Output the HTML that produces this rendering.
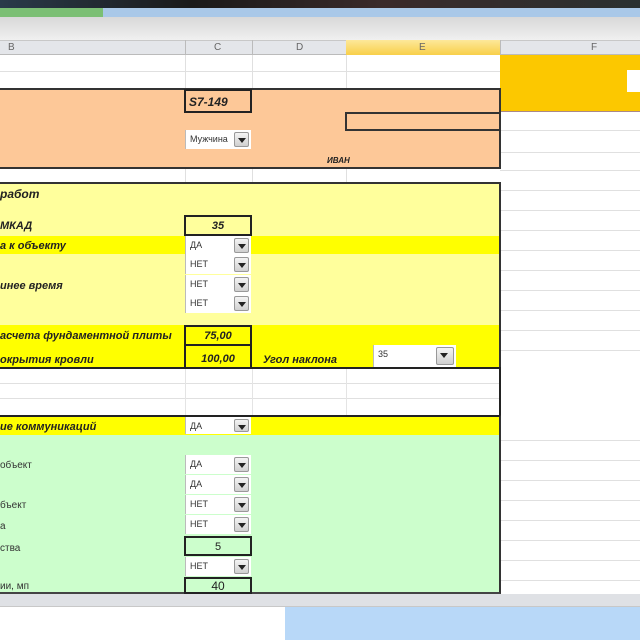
<!DOCTYPE html>
<html><head><meta charset="utf-8"><style>
*{margin:0;padding:0;box-sizing:border-box}
body{width:640px;height:640px;overflow:hidden;position:relative;background:#fff;font-family:"Liberation Sans","DejaVu Sans",sans-serif}
div{position:absolute}
.t{font-size:11px;font-weight:bold;font-style:italic;color:#222;white-space:nowrap}
.n{font-size:10px;color:#333;white-space:nowrap}
.dd{background:#fff;border-left:1px solid #bbb;height:19px;width:66px}
.dd span{position:absolute;left:4px;top:4px;font-size:9px;color:#333}
.dd i{position:absolute;right:2px;top:2px;width:15px;height:15px;background:linear-gradient(#f4f4f4,#d0d0d0);border:1px solid #999;border-radius:2px}
.dd i:after{content:"";position:absolute;left:3px;top:5px;border-left:4px solid transparent;border-right:4px solid transparent;border-top:5px solid #222}
.hl{height:1px;background:#e0e0e0}
.box{border:2px solid #222;text-align:center;font-size:11px;font-weight:bold;font-style:italic;color:#222}
</style></head><body>
<div style="left:0;top:0;width:640px;height:8px;background:linear-gradient(90deg,#2a3a4a,#1a1a1a 30%,#3a2a2a 60%,#2a3030)"></div>
<div style="left:0;top:8px;width:103px;height:9px;background:#7bbf74"></div>
<div style="left:103px;top:8px;width:537px;height:9px;background:#a9c8e8"></div>
<div style="left:0;top:17px;width:640px;height:23px;background:linear-gradient(#d8d8d8,#f0f0f0)"></div>
<div style="left:0;top:40px;width:640px;height:15px;background:#e4e6ea;border-top:1px solid #c8c8c8;border-bottom:1px solid #bbb"></div>
<div style="left:346px;top:40px;width:154px;height:15px;background:linear-gradient(#fde89a,#f8cf4a)"></div>
<div style="left:185px;top:40px;width:1px;height:15px;background:#bbb"></div>
<div style="left:252px;top:40px;width:1px;height:15px;background:#bbb"></div>
<div style="left:500px;top:40px;width:1px;height:15px;background:#bbb"></div>
<div class="n" style="left:8px;top:42px;color:#666">B</div>
<div class="n" style="left:214px;top:42px;color:#666">C</div>
<div class="n" style="left:296px;top:42px;color:#666">D</div>
<div class="n" style="left:419px;top:42px;color:#666">E</div>
<div class="n" style="left:591px;top:42px;color:#666">F</div>
<!-- white grid top -->
<div class="hl" style="left:0;top:71px;width:500px"></div>
<div style="left:185px;top:55px;width:1px;height:34px;background:#e0e0e0"></div>
<div style="left:252px;top:55px;width:1px;height:34px;background:#e0e0e0"></div>
<div style="left:346px;top:55px;width:1px;height:34px;background:#e0e0e0"></div>
<!-- F column -->
<div style="left:500px;top:55px;width:140px;height:57px;background:#fcc800;border-bottom:1px solid #a88"></div>
<div style="left:627px;top:70px;width:13px;height:22px;background:#fff"></div>
<div class="hl" style="left:500px;top:130px;width:140px"></div>
<div class="hl" style="left:500px;top:152px;width:140px"></div>
<div class="hl" style="left:500px;top:170px;width:140px"></div>
<div class="hl" style="left:500px;top:190px;width:140px"></div>
<div class="hl" style="left:500px;top:210px;width:140px"></div>
<div class="hl" style="left:500px;top:230px;width:140px"></div>
<div class="hl" style="left:500px;top:250px;width:140px"></div>
<div class="hl" style="left:500px;top:270px;width:140px"></div>
<div class="hl" style="left:500px;top:290px;width:140px"></div>
<div class="hl" style="left:500px;top:310px;width:140px"></div>
<div class="hl" style="left:500px;top:330px;width:140px"></div>
<div class="hl" style="left:500px;top:350px;width:140px"></div>
<div class="hl" style="left:500px;top:440px;width:140px"></div>
<div class="hl" style="left:500px;top:460px;width:140px"></div>
<div class="hl" style="left:500px;top:480px;width:140px"></div>
<div class="hl" style="left:500px;top:500px;width:140px"></div>
<div class="hl" style="left:500px;top:520px;width:140px"></div>
<div class="hl" style="left:500px;top:540px;width:140px"></div>
<div class="hl" style="left:500px;top:560px;width:140px"></div>
<div class="hl" style="left:500px;top:580px;width:140px"></div>
<!-- orange block -->
<div style="left:0;top:88px;width:501px;height:81px;background:#fdc898;border-top:2px solid #333;border-bottom:2px solid #333;border-right:2px solid #333"></div>
<div class="box" style="left:184px;top:89px;width:68px;height:24px;text-align:left;padding:4px 0 0 3px;font-size:12px">S7-149</div>
<div style="left:345px;top:112px;width:156px;height:19px;border:2px solid #333"></div>
<div class="dd" style="left:185px;top:130px"><span>Мужчина</span><i></i></div>
<div class="t" style="left:327px;top:156px;font-size:8px">ИВАН</div>
<!-- white row -->
<div class="hl" style="left:185px;top:169px;width:1px;height:14px"></div>
<div class="hl" style="left:252px;top:169px;width:1px;height:14px"></div>
<div class="hl" style="left:346px;top:169px;width:1px;height:14px"></div>
<!-- light yellow -->
<div style="left:0;top:182px;width:501px;height:186px;background:#ffff9c;border-top:2px solid #333;border-right:2px solid #333"></div>
<div class="t" style="left:0;top:187px;font-size:12px">работ</div>
<div class="t" style="left:0;top:220px">МКАД</div>
<div class="box" style="left:184px;top:215px;width:68px;height:21px;padding-top:3px">35</div>
<div style="left:0;top:236px;width:499px;height:18px;background:#ffff00"></div>
<div class="t" style="left:0;top:240px">а к объекту</div>
<div class="dd" style="left:185px;top:236px"><span>ДА</span><i></i></div>
<div class="dd" style="left:185px;top:255px"><span>НЕТ</span><i></i></div>
<div class="dd" style="left:185px;top:275px"><span>НЕТ</span><i></i></div>
<div class="dd" style="left:185px;top:294px"><span>НЕТ</span><i></i></div>
<div class="t" style="left:0;top:280px">инее время</div>
<div style="left:0;top:325px;width:499px;height:43px;background:#ffff00"></div>
<div class="t" style="left:0;top:330px">асчета фундаментной плиты</div>
<div class="t" style="left:0;top:354px">окрытия кровли</div>
<div class="box" style="left:184px;top:325px;width:68px;height:21px;padding-top:3px">75,00</div>
<div class="box" style="left:184px;top:344px;width:68px;height:25px;padding-top:7px">100,00</div>
<div class="t" style="left:263px;top:354px">Угол наклона</div>
<div class="dd" style="left:373px;top:345px;width:83px;height:22px"><span>35</span><i style="width:18px;height:18px"></i></div>
<!-- white rows -->
<div style="left:0;top:367px;width:501px;height:2px;background:#222"></div>
<div class="hl" style="left:0;top:383px;width:500px"></div>
<div class="hl" style="left:0;top:398px;width:500px"></div>
<div style="left:185px;top:369px;width:1px;height:47px;background:#e4e4e4"></div>
<div style="left:252px;top:369px;width:1px;height:47px;background:#e4e4e4"></div>
<div style="left:346px;top:369px;width:1px;height:47px;background:#e4e4e4"></div>
<div style="left:499px;top:369px;width:2px;height:47px;background:#222"></div>
<!-- green block -->
<div style="left:0;top:415px;width:501px;height:179px;background:#ccfecc;border-top:2px solid #222;border-right:2px solid #333;border-bottom:2px solid #444"></div>
<div style="left:0;top:417px;width:499px;height:18px;background:#ffff00"></div>
<div class="t" style="left:0;top:421px">ие коммуникаций</div>
<div class="dd" style="left:185px;top:417px;height:17px"><span>ДА</span><i style="height:13px;top:2px"></i></div>
<div class="n" style="left:0;top:460px">объект</div>
<div class="n" style="left:0;top:500px">бъект</div>
<div class="n" style="left:0;top:521px">а</div>
<div class="n" style="left:0;top:543px">ства</div>
<div class="n" style="left:0;top:581px">ии, мп</div>
<div class="dd" style="left:185px;top:455px"><span>ДА</span><i></i></div>
<div class="dd" style="left:185px;top:475px"><span>ДА</span><i></i></div>
<div class="dd" style="left:185px;top:495px"><span>НЕТ</span><i></i></div>
<div class="dd" style="left:185px;top:515px"><span>НЕТ</span><i></i></div>
<div class="box" style="left:184px;top:536px;width:68px;height:20px;font-style:normal;font-weight:normal;padding-top:3px">5</div>
<div class="dd" style="left:185px;top:557px"><span>НЕТ</span><i></i></div>
<div class="box" style="left:184px;top:577px;width:68px;height:17px;font-style:normal;font-weight:normal;font-size:12px">40</div>
<!-- bottom -->
<div style="left:0;top:594px;width:640px;height:13px;background:#dfe1e5;border-bottom:1px solid #c8c8c8"></div>
<div style="left:285px;top:607px;width:355px;height:33px;background:#b8d8f8"></div>
</body></html>
